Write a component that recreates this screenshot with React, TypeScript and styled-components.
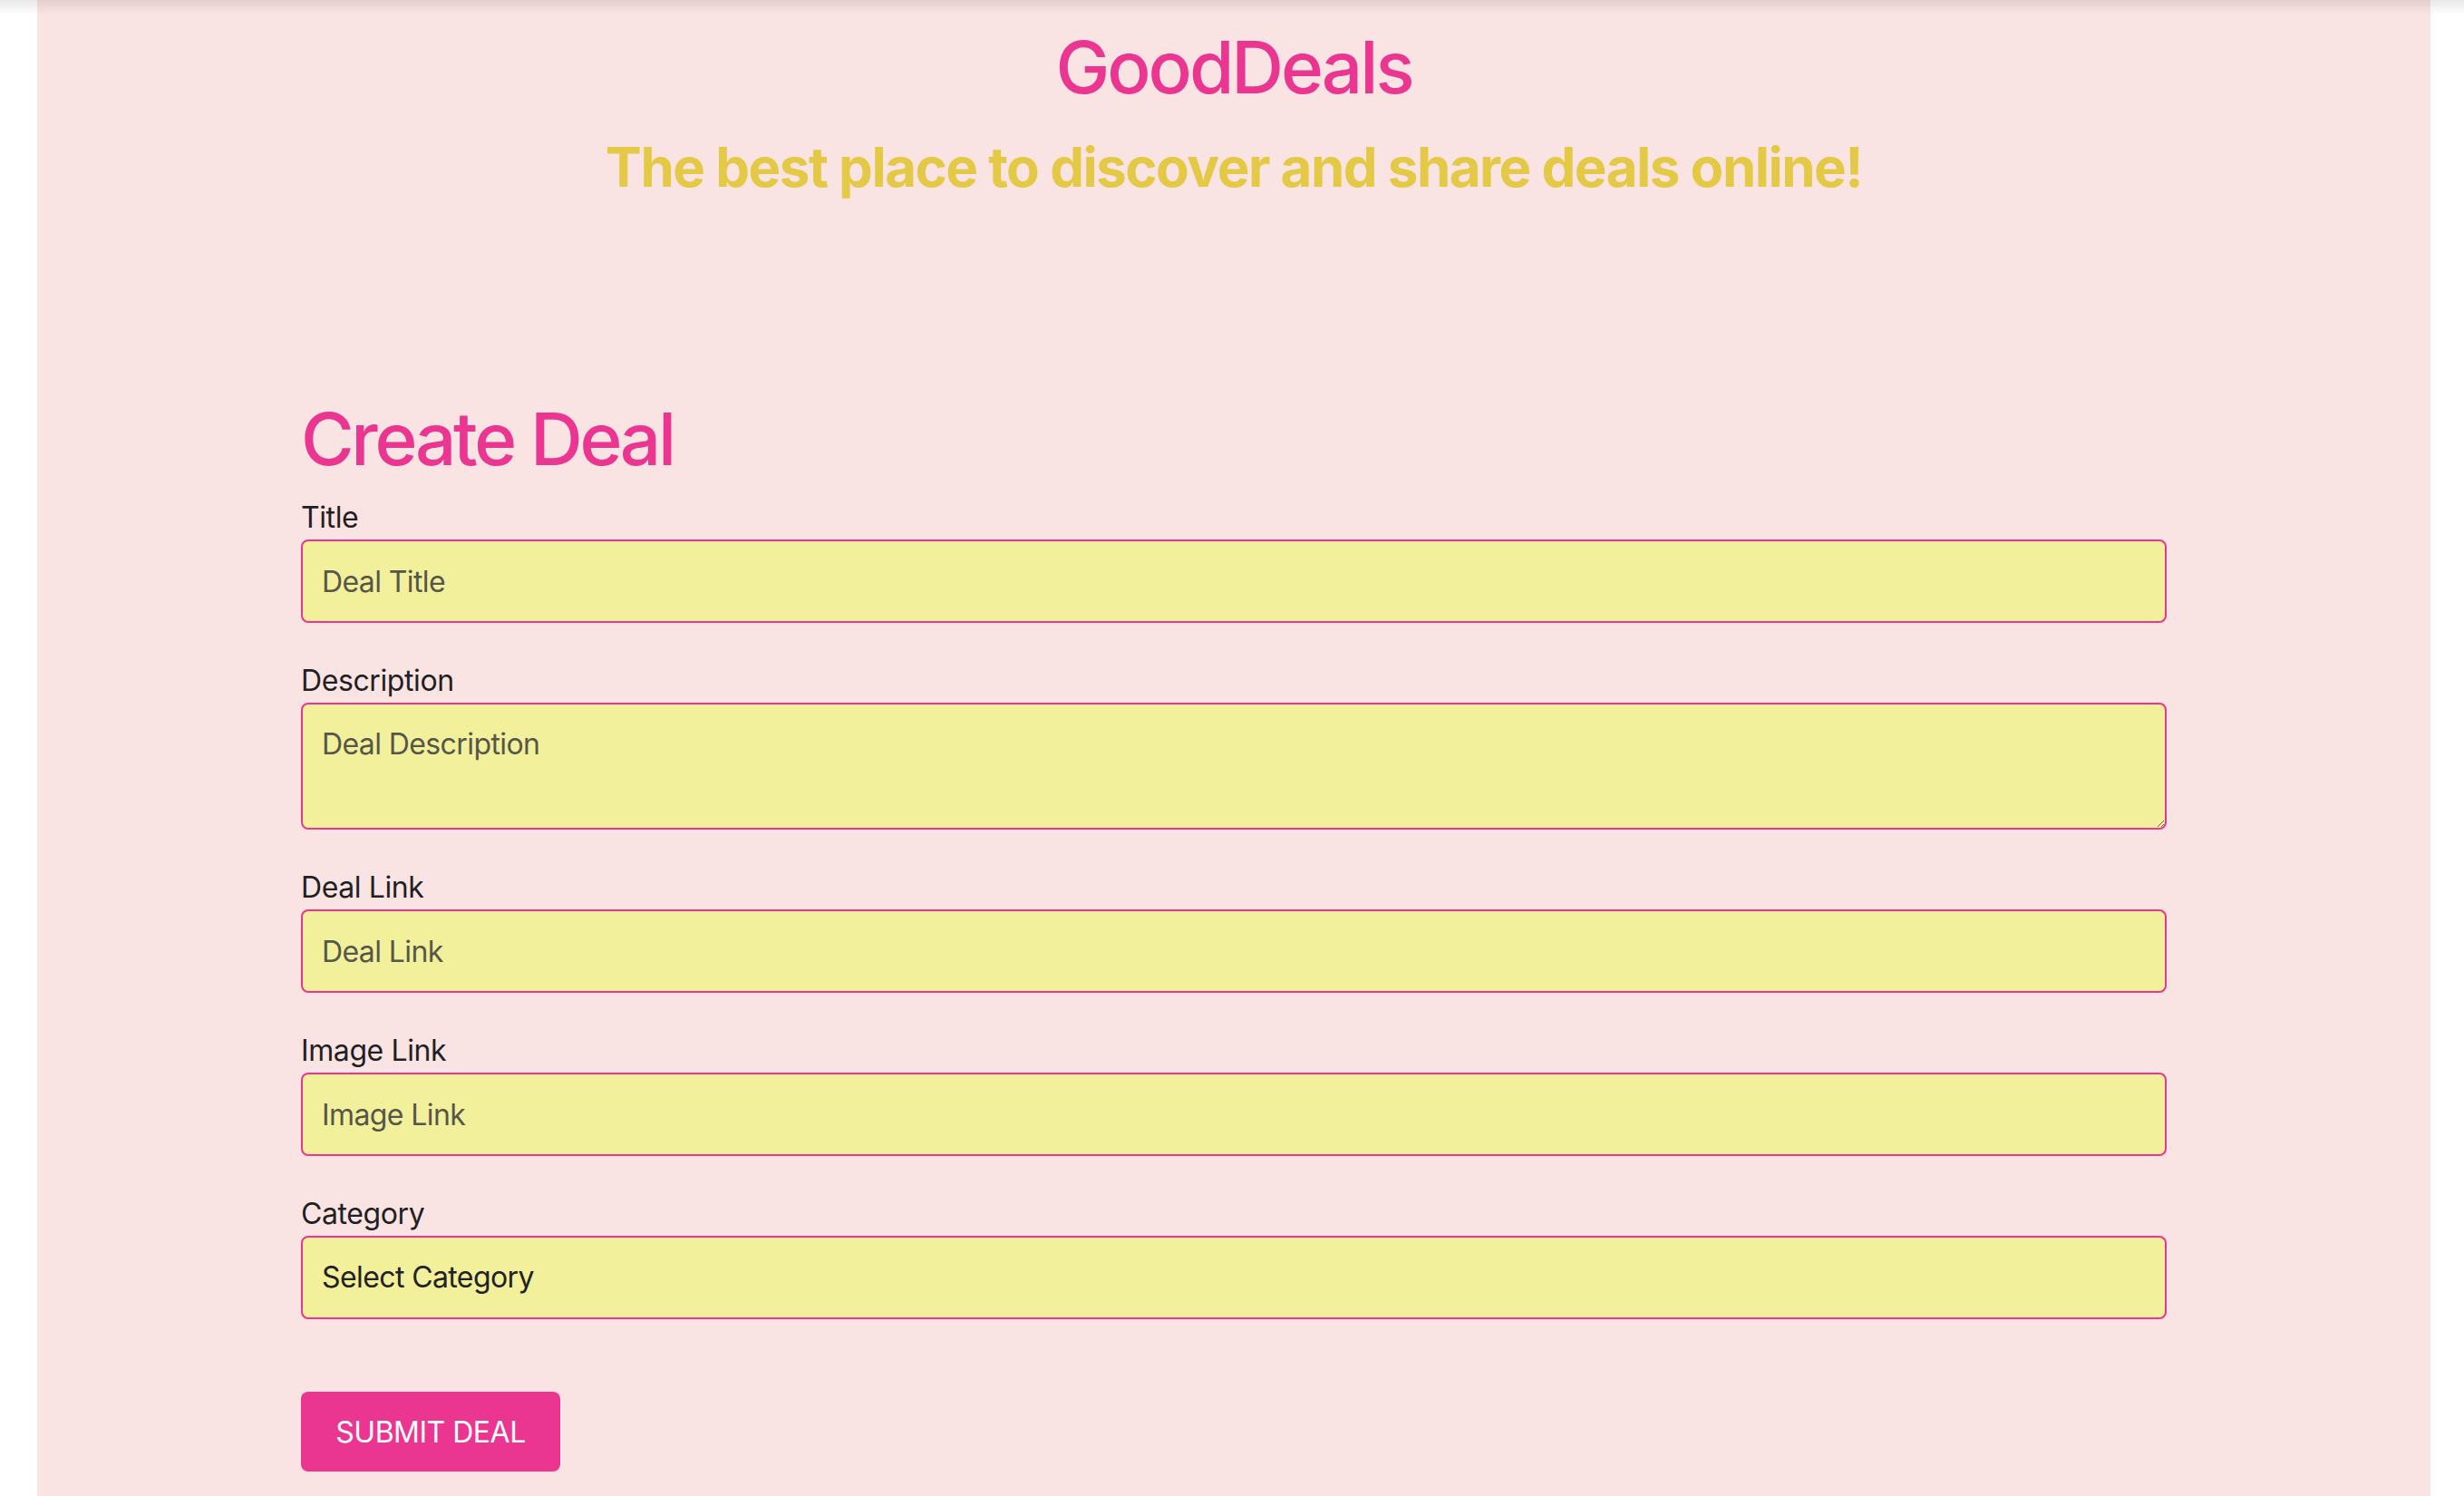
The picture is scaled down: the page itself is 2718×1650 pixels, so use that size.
import React from "react";
import styled, { createGlobalStyle } from "styled-components";

const GlobalStyle = createGlobalStyle`
  html, body {
    margin: 0;
    padding: 0;
    background: #ffffff;
  }
  body {
    font-family: Inter, "Noto Sans", "Liberation Sans", sans-serif;
  }
  * { box-sizing: border-box; }
`;

const TopShade = styled.div`
  position: fixed;
  top: 0;
  left: 0;
  right: 0;
  height: 16px;
  background: linear-gradient(to bottom, rgba(0, 0, 0, 0.09), rgba(0, 0, 0, 0));
  pointer-events: none;
`;

const Page = styled.div`
  min-height: 100vh;
  margin: 0 37px 0 41px;
  background: #fae4e3;
  padding-top: 26px;
  padding-bottom: 40px;
`;

const Header = styled.header`
  display: flex;
  flex-direction: column;
  align-items: center;
  gap: 26px;
`;

const Brand = styled.h1`
  margin: 0;
  font-size: 80px;
  line-height: 96px;
  font-weight: 500;
  letter-spacing: -3px;
  color: #ea3690;
`;

const Tagline = styled.p`
  margin: 0;
  font-size: 60px;
  line-height: 72px;
  font-weight: 700;
  letter-spacing: -1.5px;
  color: #e3c945;
`;

const FormWrap = styled.form`
  width: 2058px;
  margin: 216px auto 0;
  display: flex;
  flex-direction: column;
`;

const FormTitle = styled.h2`
  margin: 0 0 14px;
  font-size: 80px;
  line-height: 96px;
  font-weight: 500;
  letter-spacing: -3.3px;
  color: #ea3690;
`;

const Field = styled.div`
  display: flex;
  flex-direction: column;
  margin-bottom: 39px;
`;

const Label = styled.label`
  font-size: 32px;
  line-height: 48px;
  letter-spacing: -0.4px;
  color: #1f1f24;
  padding-top: 1px;
`;

const controlStyles = `
  width: 100%;
  font-family: Inter, "Noto Sans", "Liberation Sans", sans-serif;
  font-size: 32px;
  line-height: 48px;
  letter-spacing: -0.6px;
  padding: 20px 21px;
  border: 2px solid #ea3690;
  border-radius: 8px;
  background: #f3f09c;
  color: #222222;
  outline: none;
  &::placeholder {
    color: #56574a;
    opacity: 1;
  }
`;

const TextInput = styled.input`
  ${controlStyles}
  height: 92px;
`;

const TextArea = styled.textarea`
  ${controlStyles}
  height: 140px;
  resize: vertical;
  display: block;
`;

const Select = styled.select`
  ${controlStyles}
  height: 92px;
  appearance: none;
  -webkit-appearance: none;
`;

const SubmitButton = styled.button`
  align-self: flex-start;
  margin-top: 41px;
  width: 286px;
  height: 88px;
  padding: 0;
  border: none;
  border-radius: 8px;
  background: #ea3690;
  color: #ffffff;
  font-family: Inter, "Noto Sans", "Liberation Sans", sans-serif;
  font-size: 32px;
  font-weight: 400;
  letter-spacing: -0.5px;
  cursor: pointer;
`;

export default function App() {
  return (
    <>
      <GlobalStyle />
      <Page>
        <Header>
          <Brand>GoodDeals</Brand>
          <Tagline>The best place to discover and share deals online!</Tagline>
        </Header>
        <FormWrap onSubmit={(e) => e.preventDefault()}>
          <FormTitle>Create Deal</FormTitle>
          <Field>
            <Label htmlFor="title">Title</Label>
            <TextInput id="title" placeholder="Deal Title" />
          </Field>
          <Field>
            <Label htmlFor="description">Description</Label>
            <TextArea id="description" placeholder="Deal Description" rows={2} />
          </Field>
          <Field>
            <Label htmlFor="link">Deal Link</Label>
            <TextInput id="link" placeholder="Deal Link" />
          </Field>
          <Field>
            <Label htmlFor="image">Image Link</Label>
            <TextInput id="image" placeholder="Image Link" />
          </Field>
          <Field>
            <Label htmlFor="category">Category</Label>
            <Select id="category" defaultValue="">
              <option value="">Select Category</option>
              <option value="electronics">Electronics</option>
              <option value="fashion">Fashion</option>
              <option value="home">Home</option>
            </Select>
          </Field>
          <SubmitButton type="submit">SUBMIT DEAL</SubmitButton>
        </FormWrap>
      </Page>
      <TopShade />
    </>
  );
}
